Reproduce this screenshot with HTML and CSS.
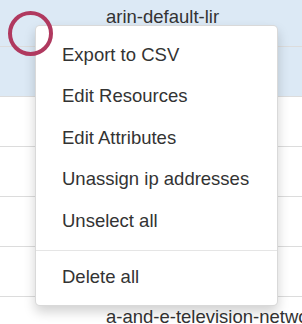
FILE: index.html
```html
<!DOCTYPE html>
<html>
<head>
<meta charset="utf-8">
<link rel="stylesheet" href="styles.css">
</head>
<body>
<div class="table">
  <div class="row selected"><span class="cell">arin-default-lir</span></div>
  <div class="row selected"><span class="cell"></span></div>
  <div class="row"><span class="cell"></span></div>
  <div class="row"><span class="cell"></span></div>
  <div class="row"><span class="cell"></span></div>
  <div class="row"><span class="cell"></span></div>
  <div class="row"><span class="cell">a-and-e-television-networks</span></div>
</div>
<ul class="menu">
  <li class="item">Export to CSV</li>
  <li class="item">Edit Resources</li>
  <li class="item">Edit Attributes</li>
  <li class="item">Unassign ip addresses</li>
  <li class="item">Unselect all</li>
  <li class="divider"></li>
  <li class="item">Delete all</li>
</ul>
<div class="ring"></div>
</body>
</html>
```

FILE: styles.css
```css
html, body {
  margin: 0;
  padding: 0;
  width: 302px;
  height: 324px;
  overflow: hidden;
  background: #fff;
  font-family: "Liberation Sans", Arial, sans-serif;
  color: #333;
}
.table {
  margin-top: -3px;
}
.row {
  height: 49px;
  border-bottom: 1px solid #dcdcdc;
  padding-left: 106px;
  box-sizing: content-box;
  white-space: nowrap;
  font-size: 18.5px;
}
.row.selected {
  background: #dce9f5;
}
.cell {
  display: block;
  padding-top: 9px;
  line-height: 21px;
  color: #333;
}
.menu {
  position: absolute;
  left: 35px;
  top: 25px;
  width: 241px;
  margin: 0;
  padding: 8px 0 7px;
  list-style: none;
  background: #fff;
  border: 1px solid rgba(0, 0, 0, 0.15);
  border-radius: 5px;
  box-shadow: 0 6px 12px rgba(0, 0, 0, 0.18);
}
.item {
  height: 41.5px;
  display: flex;
  align-items: center;
  padding-left: 26px;
  font-size: 18.5px;
  color: #333;
  white-space: nowrap;
}
.divider {
  height: 1px;
  background: #e5e5e5;
  margin: 8px 0 6px;
}
.ring {
  position: absolute;
  left: 8px;
  top: 11px;
  width: 37px;
  height: 37px;
  border: 4px solid #b0395f;
  border-radius: 50%;
}
```
